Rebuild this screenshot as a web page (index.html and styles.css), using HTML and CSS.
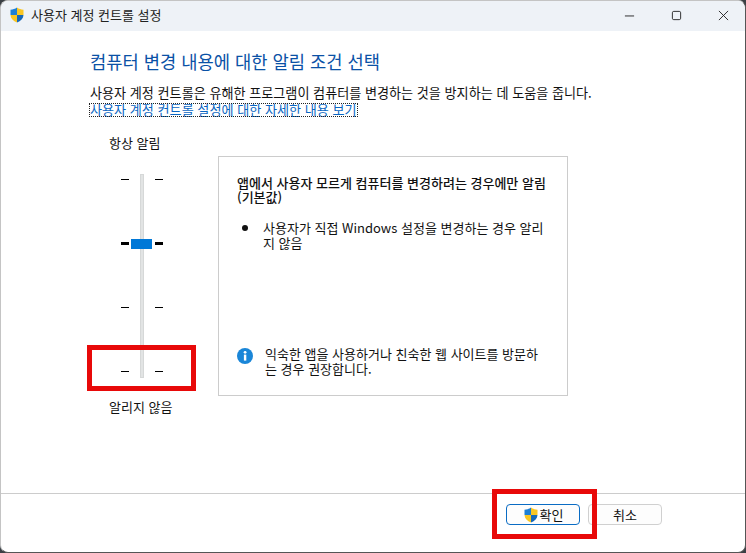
FILE: index.html
```html
<!DOCTYPE html>
<html lang="ko">
<head>
    <meta charset="UTF-8">
    <title>사용자 계정 컨트롤 설정</title>
    <link rel="stylesheet" href="styles.css">
</head>
<body>

    <div class="window">
        <!-- Title bar -->
        <div class="titlebar">
            <svg class="shield-title" viewBox="0 0 16 16">
                <path d="M8 0.5C6 2 4 2.6 1.5 2.7V8H8z" fill="#1c7fd6"/>
                <path d="M8 0.5C10 2 12 2.6 14.5 2.7V8H8z" fill="#f9c623"/>
                <path d="M1.5 8C1.7 11.6 4.2 14 8 15.5V8z" fill="#f9c623"/>
                <path d="M14.5 8C14.3 11.6 11.8 14 8 15.5V8z" fill="#1668b8"/>
            </svg>
            <span class="title">사용자 계정 컨트롤 설정</span>
            <div class="controls">
                <svg viewBox="0 0 12 12"><path d="M1 6.5H11" stroke="#222" fill="none"/></svg>
                <svg viewBox="0 0 12 12"><rect x="1.5" y="1.5" width="9" height="9" rx="1.5" stroke="#222" fill="none"/></svg>
                <svg viewBox="0 0 12 12"><path d="M1 1L11 11M11 1L1 11" stroke="#222" fill="none"/></svg>
            </div>
        </div>

        <!-- Main content -->
        <div class="content">
            <h1>컴퓨터 변경 내용에 대한 알림 조건 선택</h1>
            <p class="intro">사용자 계정 컨트롤은 유해한 프로그램이 컴퓨터를 변경하는 것을 방지하는 데 도움을 줍니다.</p>
            <a class="more-link" href="#">사용자 계정 컨트롤 설정에 대한 자세한 내용 보기</a>

            <div class="settings">
                <div class="slider-col">
                    <div class="slider-label">항상 알림</div>
                    <div class="slider">
                        <div class="track"></div>
                        <div class="stop"><span class="tick"></span><span class="tick"></span></div>
                        <div class="stop active"><span class="tick"></span><span class="thumb"></span><span class="tick"></span></div>
                        <div class="stop"><span class="tick"></span><span class="tick"></span></div>
                        <div class="stop"><span class="tick"></span><span class="tick"></span></div>
                    </div>
                    <div class="slider-label">알리지 않음</div>
                </div>

                <div class="panel">
                    <div class="panel-title">앱에서 사용자 모르게 컴퓨터를 변경하려는 경우에만 알림 (기본값)</div>
                    <div class="bullet">
                        <span class="dot"></span>
                        <span>사용자가 직접 Windows 설정을 변경하는 경우 알리지 않음</span>
                    </div>
                    <div class="note">
                        <svg class="info-icon" viewBox="0 0 16 16">
                            <circle cx="8" cy="8" r="8" fill="#1a86d8"/>
                            <rect x="6.9" y="6.6" width="2.4" height="6" fill="#fff"/>
                            <circle cx="8.1" cy="4.3" r="1.4" fill="#fff"/>
                        </svg>
                        <span>익숙한 앱을 사용하거나 친숙한 웹 사이트를 방문하는 경우 권장합니다.</span>
                    </div>
                </div>
            </div>
        </div>

        <!-- Buttons -->
        <div class="footer">
            <button class="btn btn-primary">
                <svg class="shield-btn" viewBox="0 0 16 16">
                    <path d="M8 0.5C6 2 4 2.6 1.5 2.7V8H8z" fill="#1c7fd6"/>
                    <path d="M8 0.5C10 2 12 2.6 14.5 2.7V8H8z" fill="#f9c623"/>
                    <path d="M1.5 8C1.7 11.6 4.2 14 8 15.5V8z" fill="#f9c623"/>
                    <path d="M14.5 8C14.3 11.6 11.8 14 8 15.5V8z" fill="#1668b8"/>
                </svg>확인
            </button>
            <button class="btn">취소</button>
        </div>

        <!-- Red annotation boxes -->
        <div class="mark mark-slider"></div>
        <div class="mark mark-ok"></div>
    </div>

</body>
</html>
```

FILE: styles.css
```css
* {
    box-sizing: border-box;
}

html, body {
    margin: 0;
    padding: 0;
    height: 553px;
    overflow: hidden;
}

body {
    font-family: "Noto Sans CJK KR", "Noto Sans", sans-serif;
    font-size: 13px;
    color: #111;
    background: #3a3f44;
}

.window {
    position: relative;
    width: 746px;
    height: 553px;
    display: flex;
    flex-direction: column;
    background: #fff;
    border: 1px solid #c4c4c4;
    border-right-color: #555;
    border-bottom-color: #555;
    border-radius: 8px;
    overflow: hidden;
}

.titlebar {
    height: 30px;
    flex: none;
    display: flex;
    align-items: center;
    padding: 0 0 2px 8px;
    background: #eef2f7;
}

.shield-title {
    width: 16px;
    height: 16px;
    margin-right: 6px;
}

.title {
    font-size: 13px;
    padding-bottom: 2px;
    color: #222;
}

.controls {
    margin-left: auto;
    display: flex;
    gap: 36px;
    padding-right: 16px;
}

.controls svg {
    width: 11px;
    height: 11px;
}

.content {
    flex: 1;
    padding: 19px 0 0 89px;
}

h1 {
    margin: 0 0 13px;
    font-size: 17.7px;
    line-height: 22px;
    font-weight: 400;
    color: #0a51a6;
}

.intro {
    margin: 0;
    font-size: 13.1px;
    line-height: 15px;
}

.more-link {
    display: inline-block;
    margin-left: -1px;
    padding: 0 1px;
    font-size: 13.1px;
    color: #0a66c2;
    text-decoration: none;
    outline: 1px dotted #222;
    outline-offset: -1px;
    line-height: 14px;
}

.settings {
    display: flex;
    margin-top: 37px;
}

.slider-col {
    width: 104px;
    margin-right: 24px;
    margin-top: -22px;
    flex: none;
}

.slider-label {
    padding-left: 19px;
    line-height: 17px;
}

.slider {
    position: relative;
    height: 204px;
    margin: 23px 0 20px;
    padding-top: 5px;
    display: flex;
    flex-direction: column;
    gap: 63px;
}

.track {
    position: absolute;
    left: 50px;
    top: 0;
    width: 4px;
    height: 204px;
    background: #e2e4e4;
    border: 1px solid #d6d8d8;
}

.stop {
    position: relative;
    height: 1px;
    display: flex;
    justify-content: center;
    align-items: center;
    gap: 26px;
}

.tick {
    width: 8px;
    height: 1px;
    flex: none;
    background: #000;
}

.stop.active {
    gap: 0;
}

.stop.active .tick {
    height: 3px;
}

.thumb {
    width: 21px;
    height: 10px;
    flex: none;
    margin: 0 3px 0 2px;
    background: #0078d7;
}

.panel {
    width: 350px;
    height: 240px;
    display: flex;
    flex-direction: column;
    padding: 19px 18px 19px;
    border: 1px solid #ccc;
}

.panel-title {
    font-weight: 500;
    line-height: 14px;
    margin-bottom: 16px;
}

.bullet {
    display: flex;
    line-height: 15px;
    padding-left: 5px;
}

.dot {
    flex: none;
    width: 6px;
    height: 6px;
    margin: 5px 15px 0 0;
    border-radius: 50%;
    background: #111;
}

.note {
    margin-top: auto;
    display: flex;
    line-height: 15px;
}

.info-icon {
    flex: none;
    width: 16px;
    height: 16px;
    margin: 2px 12px 0 0;
}

.footer {
    height: 59px;
    flex: none;
    display: flex;
    justify-content: flex-end;
    gap: 8px;
    padding: 10px 83px 0 0;
    border-top: 1px solid #ccc;
}

.btn {
    width: 74px;
    height: 21px;
    display: flex;
    align-items: center;
    justify-content: center;
    padding: 0;
    font-family: inherit;
    font-size: 13px;
    color: #111;
    background: #fdfdfd;
    border: 1px solid #d0d0d0;
    border-radius: 4px;
}

.btn-primary {
    border-color: #0a6cc4;
}

.shield-btn {
    width: 16px;
    height: 16px;
    margin-right: 1px;
}

.mark {
    position: absolute;
    border: 5px solid #e80909;
}

.mark-slider {
    left: 86px;
    top: 344px;
    width: 109px;
    height: 46px;
}

.mark-ok {
    left: 491px;
    top: 488px;
    width: 105px;
    height: 50px;
}
```
